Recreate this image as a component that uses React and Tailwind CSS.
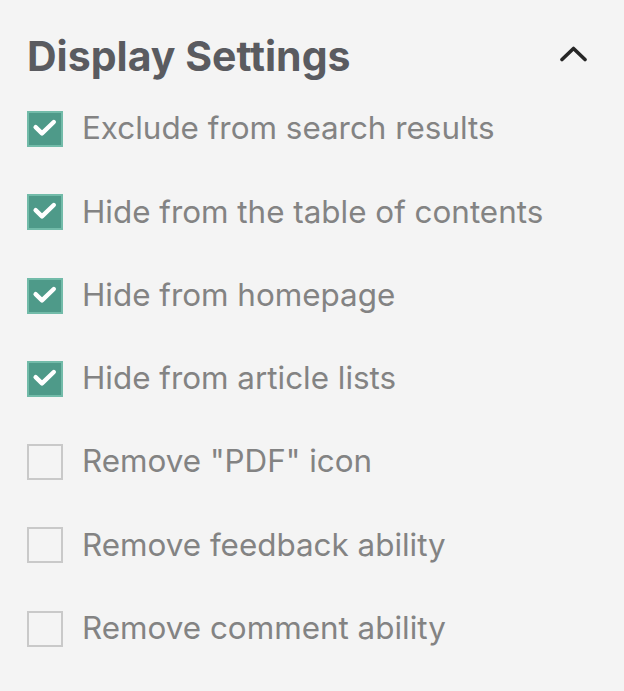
import React from "react";

const items = [
  ["Exclude from search results", true],
  ["Hide from the table of contents", true],
  ["Hide from homepage", true],
  ["Hide from article lists", true],
  ['Remove "PDF" icon', false],
  ["Remove feedback ability", false],
  ["Remove comment ability", false],
];

function Box({ checked }) {
  if (checked) {
    return (
      <div className="w-9 h-9 shrink-0 bg-[#4e9a89] border-2 border-[#72bba9]">
        <svg width="32" height="32" viewBox="0 0 32 32" fill="none" stroke="white" strokeWidth="4.4" strokeLinecap="round" strokeLinejoin="round">
          <path d="M6.6 14.2L13 20.4L24.8 9" />
        </svg>
      </div>
    );
  }
  return <div className="w-9 h-9 shrink-0 border-2 border-[#c9c9c9] bg-[#f4f4f4]" />;
}

export default function App() {
  return (
    <div className="w-[624px] h-[691px] bg-[#f4f4f4] font-['Inter',sans-serif] pl-[27px] pr-[36px] pt-[30px]">
      <div className="flex items-center justify-between h-[52px]">
        <h1 className="text-[41px] font-bold text-[#5a5b60] leading-none">Display Settings</h1>
        <svg className="mb-[6px]" width="29" height="17" viewBox="0 0 29 17" fill="none" stroke="#262626" strokeWidth="3.6" strokeLinecap="round" strokeLinejoin="round">
          <path d="M3 14.5L14.5 3.5L26 14.5" />
        </svg>
      </div>
      <div className="flex flex-col mt-[29px] gap-[47.3px]">
        {items.map(([label, checked]) => (
          <div key={label} className="flex items-center gap-[19px] h-9">
            <Box checked={checked} />
            <span className="text-[31.4px] text-[#838383] leading-none">{label}</span>
          </div>
        ))}
      </div>
    </div>
  );
}
